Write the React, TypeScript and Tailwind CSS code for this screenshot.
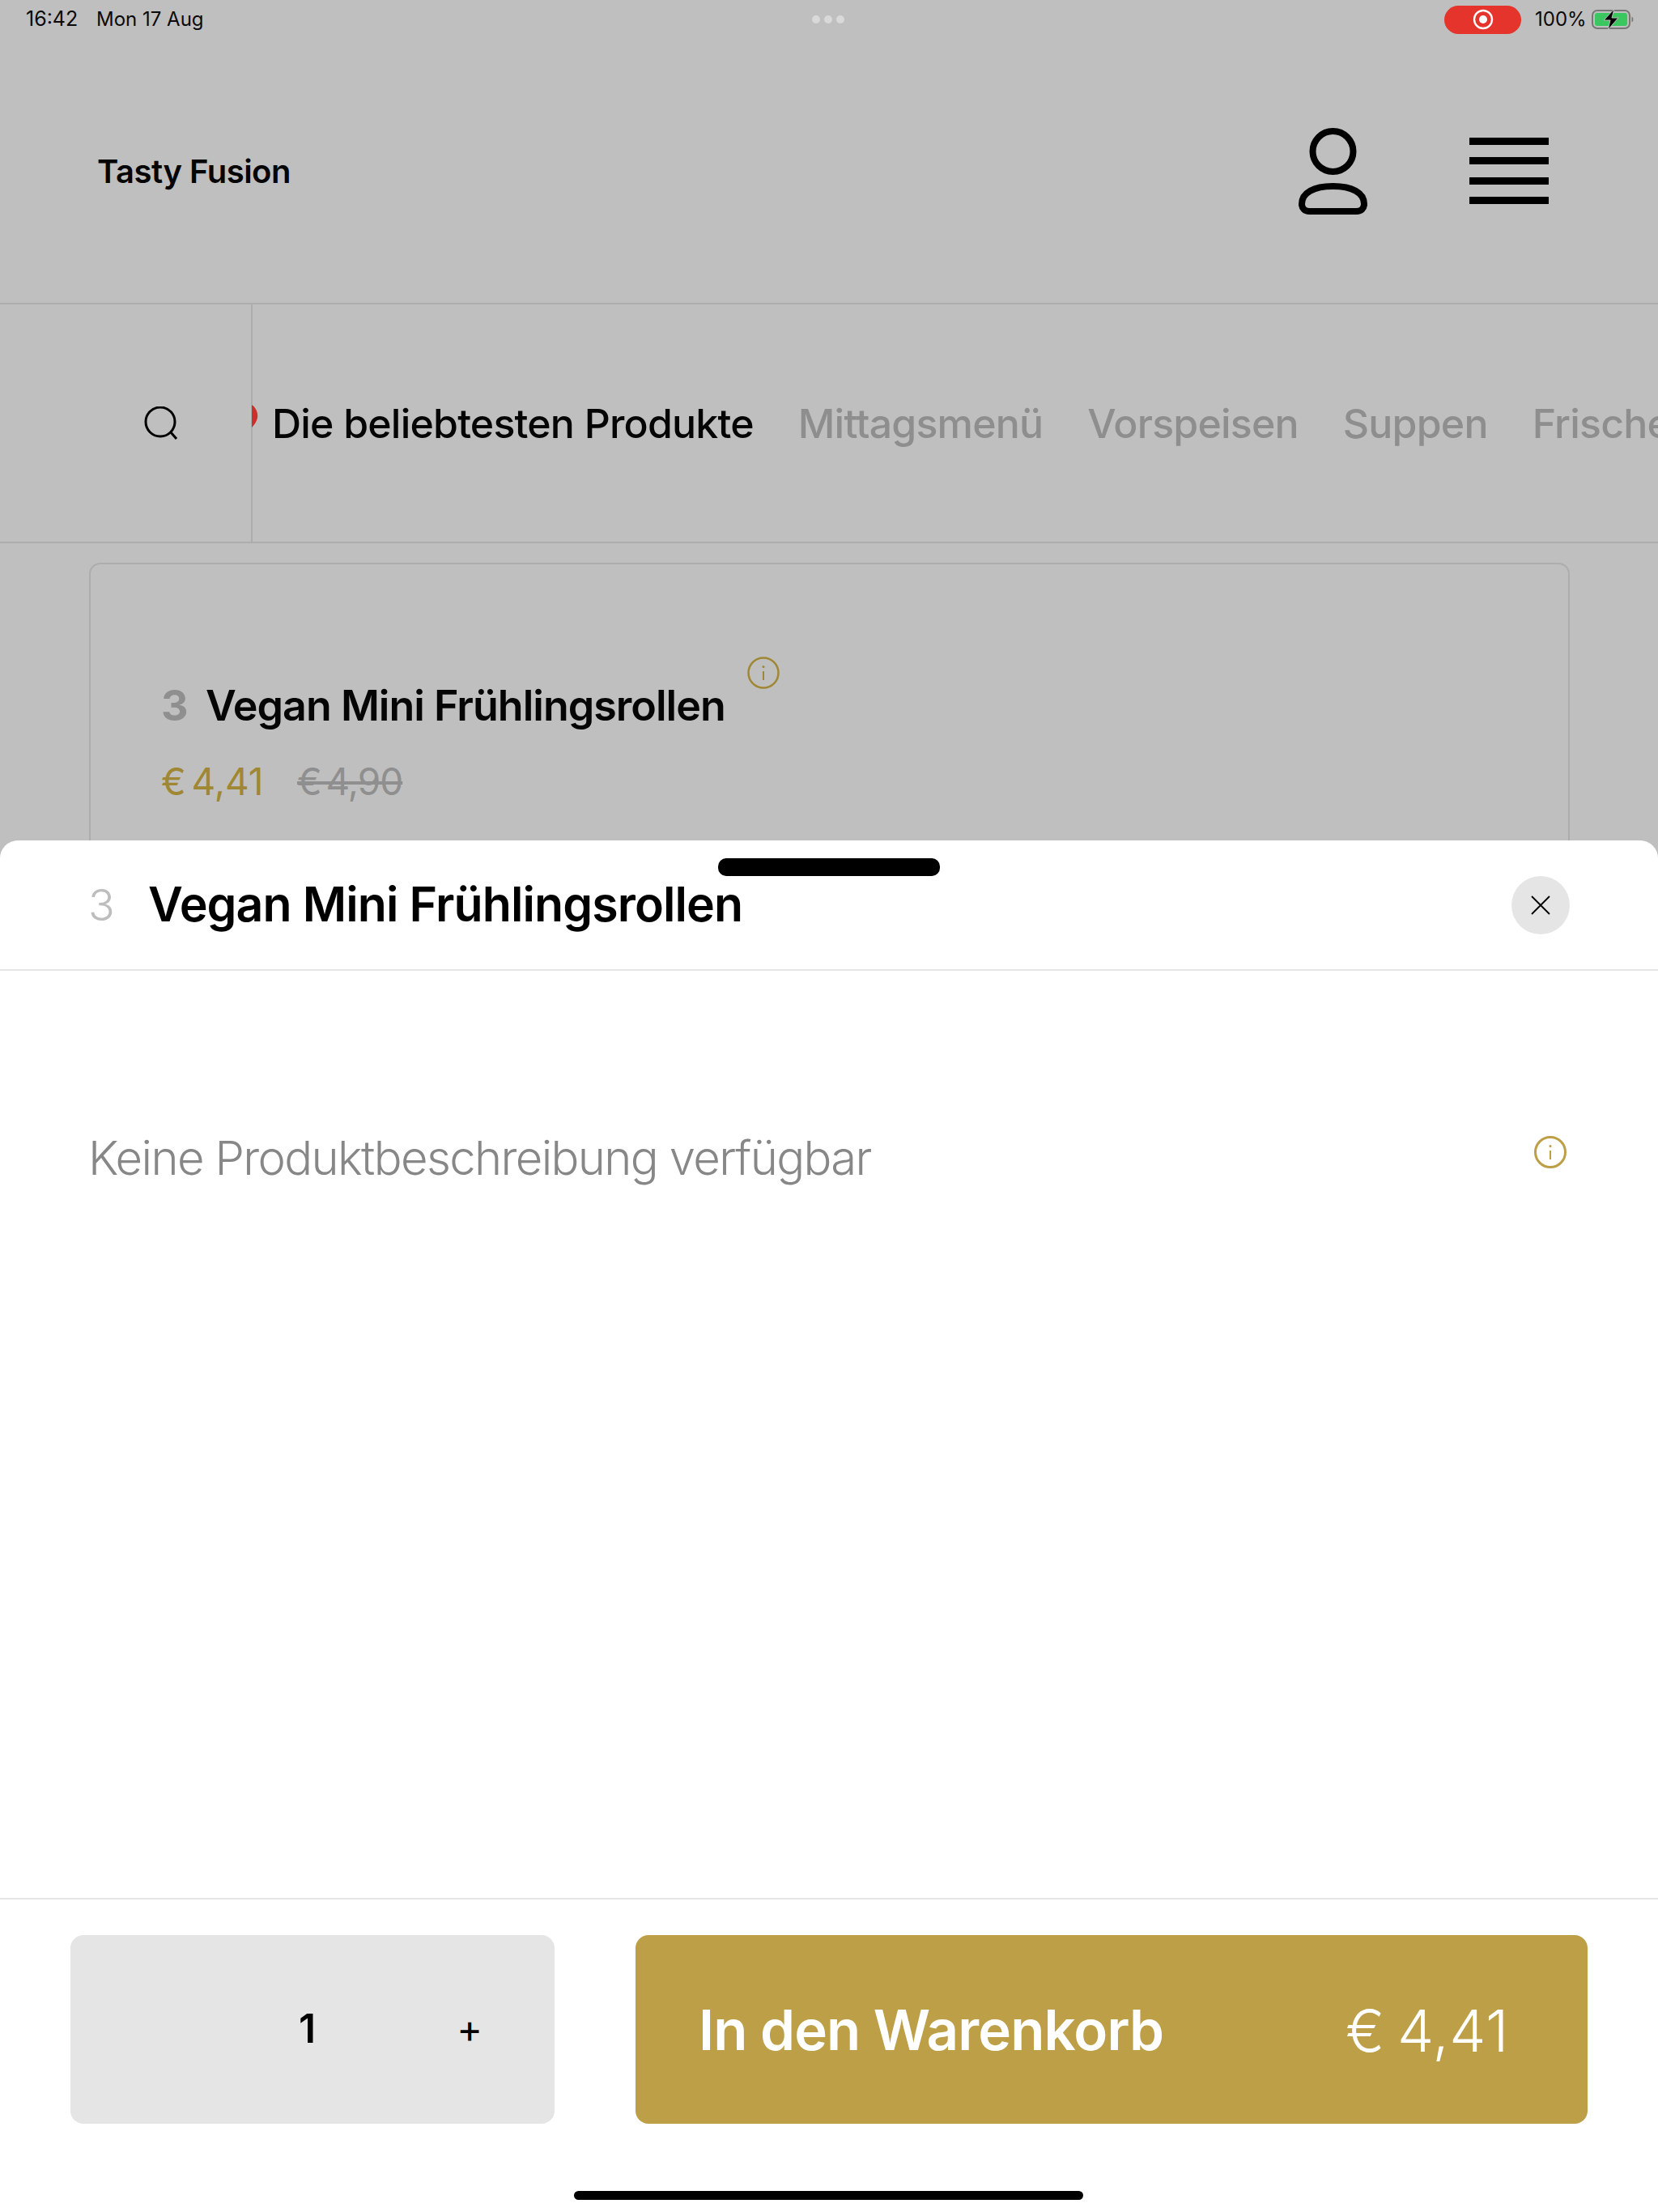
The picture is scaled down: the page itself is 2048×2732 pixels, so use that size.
import React from "react";

const font = { fontFamily: "Inter, 'Noto Sans', sans-serif" };

function Info({ className, sw = 2.5 }: { className: string; sw?: number }) {
  return (
    <svg viewBox="0 0 40 40" fill="none" className={className} stroke="currentColor">
      <circle cx="20" cy="20" r="18.5" strokeWidth={sw} />
      <line x1="20" y1="18" x2="20" y2="29" strokeWidth="2" />
      <circle cx="20" cy="12.5" r="1.5" fill="currentColor" stroke="none" />
    </svg>
  );
}

function StatusBar() {
  return (
    <div className="h-[48px] flex items-center pl-[32px] pr-[29px] text-[#0a0a0a] relative">
      <span className="w-[87px] text-[25px]">16:42</span>
      <span className="text-[24px]">Mon 17 Aug</span>
      <div className="absolute left-[1003px] top-[19px] flex gap-[5px]">
        <span className="w-[10px] h-[10px] rounded-full bg-[#d9d9d9]" />
        <span className="w-[10px] h-[10px] rounded-full bg-[#d9d9d9]" />
        <span className="w-[10px] h-[10px] rounded-full bg-[#d9d9d9]" />
      </div>
      <div className="ml-auto flex items-center">
        <div className="w-[95px] h-[35px] rounded-[18px] bg-[#e5342c] flex items-center justify-center mr-[17px]">
          <svg viewBox="0 0 26 26" className="w-[26px] h-[26px]" fill="none">
            <circle cx="13" cy="13" r="11" stroke="#fff" strokeWidth="2.4" />
            <circle cx="13" cy="13" r="5" fill="#fff" />
          </svg>
        </div>
        <span className="text-[24px] mr-[6px] w-[64px]">100%</span>
        <svg viewBox="0 0 53 26" className="w-[53px] h-[26px]" fill="none">
          <rect x="1" y="2" width="46" height="22" rx="6" stroke="#777" strokeWidth="2" />
          <rect x="4" y="5" width="40" height="16" rx="3" fill="#3ac75f" />
          <path d="M49.500 9.500c2.500 .8 2.500 6.200 0 7z" fill="#777" />
          <path d="M28 0 15 14h8l-3 12 13-15h-8z" fill="#000" stroke="#bfbfbf" strokeWidth="1" />
        </svg>
      </div>
    </div>
  );
}

function Header() {
  return (
    <div className="h-[328px] border-b-2 border-[#adadad] flex items-center pl-[120px] pr-[135px]">
      <span className="text-[40px] font-semibold tracking-[-0.5px] text-[#050505] mt-[2px]">Tasty Fusion</span>
      <div className="ml-auto flex items-center gap-[126px]">
        <svg viewBox="0 0 85 107" className="w-[85px] h-[107px]" fill="none" stroke="#000" strokeWidth="8">
          <ellipse cx="42.500" cy="29" rx="25" ry="25" />
          <path d="M13.500 103h58c6 0 9.500-4 9.500-9 0-14-15-22-38.500-22S4 80 4 94c0 5 3.500 9 9.500 9z" />
        </svg>
        <div className="w-[98px] flex flex-col gap-[15.5px]">
          <span className="h-[9px] bg-black" />
          <span className="h-[9px] bg-black" />
          <span className="h-[9px] bg-black" />
          <span className="h-[9px] bg-black" />
        </div>
      </div>
    </div>
  );
}

function Nav() {
  return (
    <div className="h-[295px] border-b-2 border-[#adadad] flex overflow-hidden">
      <div className="w-[312px] shrink-0 border-r-2 border-[#adadad] flex items-center justify-center pl-[87px] relative">
        <svg viewBox="0 0 42 42" className="w-[42px] h-[42px]" fill="none" stroke="#000" strokeWidth="3">
          <circle cx="20" cy="19" r="18" />
          <path d="M33 32l7 8" />
        </svg>
        <svg viewBox="0 0 8 28" className="absolute left-[311px] top-[124px] w-[8px] h-[28px]">
          <path d="M0 0C5 3 8 10 7 16 6 21 3 25 0 28z" fill="#c9302a" />
        </svg>
      </div>
      <div className="flex items-center gap-[55px] pl-[24px] pt-[2px] text-[50px] font-medium tracking-[-0.8px] text-[#8e8e8e] whitespace-nowrap">
        <span className="text-[#050505]">Die beliebtesten Produkte</span>
        <span>Mittagsmenü</span>
        <span>Vorspeisen</span>
        <span>Suppen</span>
        <span>Frische Rollen</span>
      </div>
    </div>
  );
}

function Card() {
  return (
    <div className="ml-[110px] mt-[24px] w-[1829px] h-[600px] border-2 border-[#adadad] rounded-[14px] pl-[87px] pt-[136px]">
      <div className="flex items-center relative w-fit">
        <span className="text-[52px] font-bold text-[#8f8f8f] w-[55px]">3</span>
        <span className="text-[52px] font-semibold tracking-[-1px] text-[#050505]">Vegan Mini Frühlingsrollen</span>
        <Info className="absolute left-[724px] -top-[22px] w-[40px] h-[40px] text-[#a08733]" />
      </div>
      <div className="flex items-center mt-[20px] text-[46px] [word-spacing:-6px]">
        <span className="text-[#a08733] w-[168px]">€ 4,41</span>
        <span className="text-[#8f8f8f] line-through tracking-[-1px]">€ 4,90</span>
      </div>
    </div>
  );
}

function Sheet() {
  return (
    <div className="absolute left-0 right-0 top-[1038px] bottom-0 bg-white rounded-t-[22px] flex flex-col">
      <div className="absolute left-[887px] top-[22px] w-[274px] h-[22px] rounded-[10px] bg-black" />
      <div className="h-[161px] shrink-0 border-b-2 border-[#e5e5e5] flex items-center pl-[109px] pr-[109px]">
        <span className="text-[54px] font-light text-[#bdbdbd] w-[74px]">3</span>
        <span className="text-[59px] font-semibold tracking-[-0.9px] text-black">Vegan Mini Frühlingsrollen</span>
        <button className="ml-auto w-[72px] h-[72px] rounded-full bg-[#e5e5e5] flex items-center justify-center">
          <svg viewBox="0 0 24 24" className="w-[24px] h-[24px]" stroke="#000" strokeWidth="1.800">
            <path d="M1 1l22 22M23 1 1 23" />
          </svg>
        </button>
      </div>
      <div className="flex-1 flex items-start pl-[109px] pr-[113px] pt-[191px]">
        <span className="text-[58px] font-light tracking-[-1.65px] text-[#878787] leading-[80px]">Keine Produktbeschreibung verfügbar</span>
        <Info className="ml-auto mt-[13px] w-[40px] h-[40px] text-[#bd9f47]" sw={3} />
      </div>
      <div className="h-[388px] shrink-0 border-t-2 border-[#e5e5e5] pt-[44px] pl-[87px] pr-[87px]">
        <div className="flex gap-[100px] h-[233px]">
          <div className="w-[598px] rounded-[16px] bg-[#e5e5e5] flex items-center text-black">
            <span className="ml-[282px] text-[50px] font-semibold -mt-[2px]">1</span>
            <span className="ml-[174px] text-[48px] -mt-[1px]">+</span>
          </div>
          <button className="flex-1 rounded-[16px] bg-[#bd9f47] flex items-center justify-between pl-[78px] pr-[97px] pt-[3px] text-white text-[69px]">
            <span className="font-semibold tracking-[-0.9px]">In den Warenkorb</span>
            <span className="font-light text-[72px] tracking-[0.6px] [word-spacing:-6px]">€ 4,41</span>
          </button>
        </div>
      </div>
      <div className="absolute left-[709px] bottom-[15px] w-[629px] h-[11px] rounded-full bg-black" />
    </div>
  );
}

export default function App() {
  return (
    <div style={font} className="relative w-[2048px] h-[2732px] overflow-hidden bg-[#bfbfbf]">
      <StatusBar />
      <Header />
      <Nav />
      <Card />
      <Sheet />
    </div>
  );
}
